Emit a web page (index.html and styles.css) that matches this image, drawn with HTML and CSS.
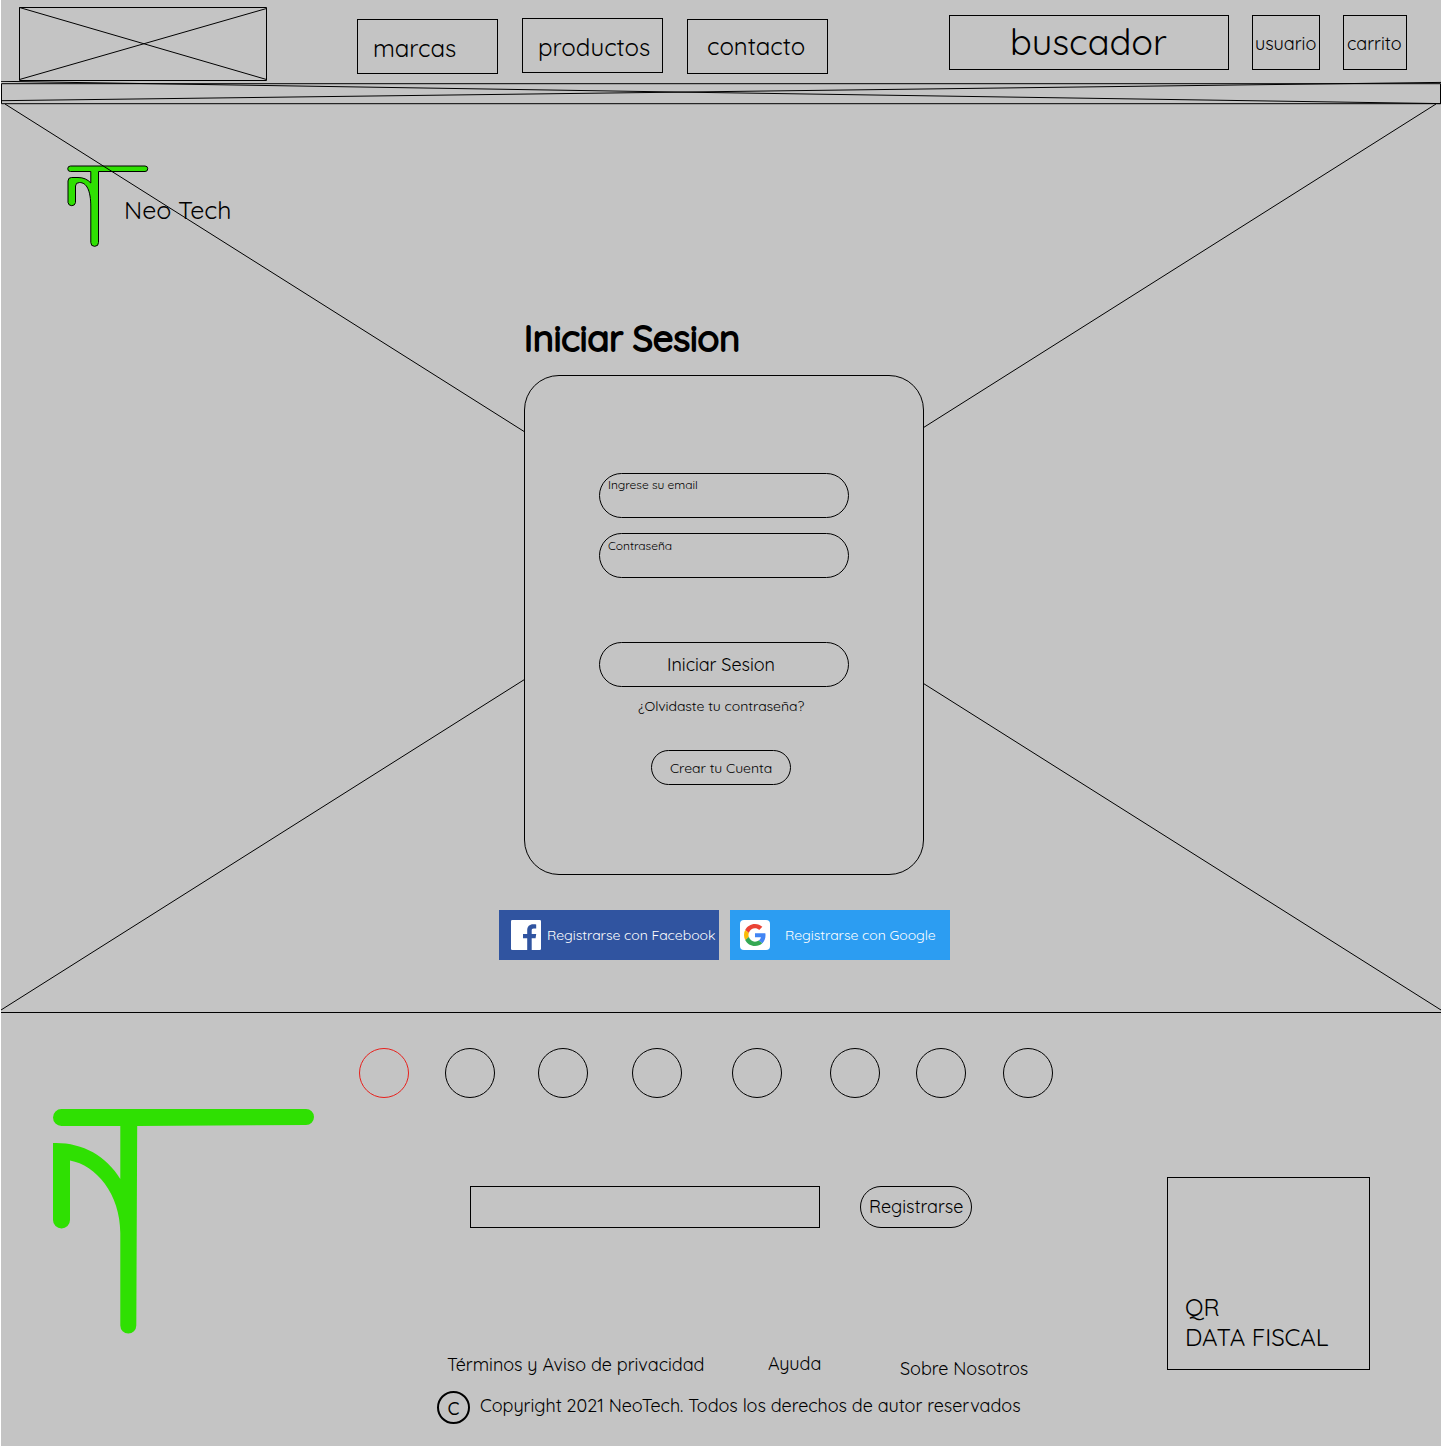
FILE: index.html
```
<!DOCTYPE html>
<html lang="es">
<head>
<meta charset="utf-8">
<title>Neo Tech - Iniciar Sesion</title>
<link rel="stylesheet" href="styles.css">
</head>
<body>
<div class="page">
  <header class="header">
    <svg class="logo-box" viewBox="0 0 248 74"><path d="M.5.5h247v73H.5zM.5.5l247 72M.5 72.5L247.5 1.500" fill="none" stroke="#000"/></svg>
    <nav class="nav">
      <a class="box marcas">marcas</a>
      <a class="box productos">productos</a>
      <a class="box contacto">contacto</a>
    </nav>
    <div class="box buscador">buscador</div>
    <div class="box usuario">usuario</div>
    <div class="box carrito">carrito</div>
  </header>
  <svg class="strip" viewBox="0 0 1440 24"><path d="M.5 2.700H1439.500V22.700H.5zM0 .3L680 11.100L1440 22.600M0 19.700L680 11.100L1440 1.400" fill="none" stroke="#000"/></svg>

  <main class="main">
    <svg class="cross" viewBox="0 0 1440 908"><path d="M4 0L1440 906M0 906L1435 0" fill="none" stroke="#000"/></svg>
    <div class="brand">
      <svg class="brand-mark" viewBox="0 0 84 84"><path d="M4.500 2H79A2.750 2.750 0 0 1 79 7.500H32.500V78.500A3.800 3.800 0 0 1 24.800 78.500V43C24.800 26 20.500 18.500 13.500 18.500Q9.500 18.500 9.500 22V38.500A3.800 3.800 0 0 1 2 38.500V17Q2 13.500 5.500 13.500H12Q20 13.500 24.800 19V7.500H4.500A2.750 2.750 0 0 1 4.500 2Z" fill="#2fe002" stroke="#000"/></svg>
      <span class="brand-name">Neo Tech</span>
    </div>
    <h1 class="title">Iniciar Sesion</h1>
    <form class="card">
      <label class="field">Ingrese su email</label>
      <label class="field pass">Contraseña</label>
      <div class="submit">Iniciar Sesion</div>
      <a class="forgot">¿Olvidaste tu contraseña?</a>
      <a class="create">Crear tu Cuenta</a>
    </form>
    <div class="social">
      <a class="sbtn facebook">
        <svg class="sicon" viewBox="0 0 30 30"><rect width="30" height="30" rx="1.300" fill="#fff"/><path d="M16.200 30V18.300H12V14H16.200V10.500C16.200 6.500 18.500 4.300 22.200 4.300C23.700 4.300 24.700 4.400 25.200 4.500V8.500H22.800C21 8.500 20.700 9.400 20.700 10.700V14H25.200L24.600 18.300H20.700V30Z" fill="#3054a0"/></svg>
        <span>Registrarse con Facebook</span>
      </a>
      <a class="sbtn google">
        <svg class="sicon" viewBox="0 0 30 30"><rect width="30" height="30" rx="4" fill="#fff"/><g transform="translate(4 4) scale(.458)"><path fill="#ea4335" d="M24 9.500c3.540 0 6.710 1.220 9.210 3.600l6.850-6.850C35.900 2.380 30.470 0 24 0 14.620 0 6.510 5.380 2.560 13.220l7.980 6.190C12.430 13.720 17.740 9.500 24 9.500z"/><path fill="#4285f4" d="M46.980 24.550c0-1.570-.15-3.090-.38-4.550H24v9.020h12.940c-.58 2.960-2.260 5.480-4.780 7.180l7.730 6c4.510-4.180 7.090-10.360 7.090-17.650z"/><path fill="#fbbc05" d="M10.530 28.590c-.48-1.450-.76-2.990-.76-4.590s.27-3.140.76-4.590l-7.980-6.190C.92 16.460 0 20.120 0 24c0 3.880.92 7.540 2.560 10.780l7.970-6.190z"/><path fill="#34a853" d="M24 48c6.480 0 11.930-2.130 15.890-5.810l-7.730-6c-2.150 1.450-4.920 2.300-8.160 2.300-6.260 0-11.570-4.220-13.470-9.910l-7.980 6.190C6.510 42.620 14.620 48 24 48z"/></g></svg>
        <span>Registrarse con Google</span>
      </a>
    </div>
  </main>

  <footer class="footer">
    <svg class="foot-logo" viewBox="0 0 262 225"><path d="M8.500 0H253A8 8 0 0 1 253 16L84.200 17L83.300 216.500A8 8 0 0 1 67.300 216.500V124C67.300 85 43 56 17 51.500V111A8.500 8.500 0 0 1 0 111V34C28 33 53 46 67.300 70V17H8.500A8.500 8.500 0 0 1 8.500 0Z" fill="#2fe002"/></svg>
    <div class="foot-center">
      <div class="dots">
        <i class="dot red"></i><i class="dot d2"></i><i class="dot d3"></i><i class="dot d4"></i><i class="dot d5"></i><i class="dot d6"></i><i class="dot d7"></i><i class="dot d8"></i>
      </div>
      <div class="newsletter">
        <div class="news-input"></div>
        <div class="news-btn">Registrarse</div>
      </div>
      <div class="links"><a class="l1">Términos y Aviso de privacidad</a><a class="l2">Ayuda</a><a class="l3">Sobre Nosotros</a></div>
      <div class="copy"><span class="c-mark">c</span><span class="c-text">Copyright 2021 NeoTech. Todos los derechos de autor reservados</span></div>
    </div>
    <div class="qr">QR<br>DATA FISCAL</div>
  </footer>
</div>
</body>
</html>
```
FILE: styles.css
```
* { box-sizing: border-box; }
body {
  margin: 0;
  background: #fff;
  color: #000;
  font-family: Quicksand, Lato, sans-serif;
  font-size: 18px;
  font-weight: 400;
  line-height: 1.25;
  letter-spacing: -0.04px;
  white-space: nowrap;
}
svg { display: block; flex: none; }
.page {
  width: 1440px;
  height: 1446px;
  margin-left: 1px;
  background: #c4c4c4;
  overflow: hidden;
}

.header { display: flex; align-items: flex-start; height: 81px; }
.logo-box { width: 248px; height: 74px; margin: 7px 0 0 18px; }
.nav { display: flex; gap: 24px; margin: 18px 0 0 90px; align-items: flex-start; }
.box { flex: none; border: 1px solid #000; height: 55px; }
.nav .box { width: 141px; font-size: 24px; }
.marcas { margin-top: 1px; padding: 13px 0 0 15px; }
.productos { padding: 13px 0 0 15px; }
.contacto { margin-top: 1px; padding: 11px 0 0 19px; }
.buscador { width: 280px; margin: 15px 0 0 121px; padding: 3px 0 0 60px; font-size: 36px; }
.usuario { width: 68px; margin: 15px 0 0 23px; padding: 17px 0 0 2px; }
.carrito { width: 64px; margin: 15px 0 0 23px; padding: 17px 0 0 3px; }
.strip { width: 1440px; height: 24px; }

.main {
  position: relative;
  height: 909px;
  margin-top: -1px;
  border-bottom: 1px solid #000;
}
.cross { position: absolute; left: 0; top: 0; width: 1440px; height: 908px; z-index: 1; }
.brand { display: flex; height: 142px; padding: 60px 0 0 65px; }
.brand-mark { width: 84px; height: 84px; }
.brand-name { margin: 30px 0 0 -26px; font-size: 25px; }
.title {
  margin: 69px 0 0 523px;
  height: 60px;
  font-size: 36px;
  font-weight: 400;
  letter-spacing: -0.08px;
  -webkit-text-stroke: 2px #000;
}
.card {
  position: relative;
  z-index: 2;
  display: flex;
  flex-direction: column;
  align-items: flex-start;
  width: 400px;
  height: 500px;
  margin-left: 523px;
  padding: 97px 0 0 74px;
  border: 1px solid #000;
  border-radius: 35px;
  background: #c4c4c4;
}
.field, .submit { width: 250px; height: 45px; border: 1px solid #000; border-radius: 22.5px; }
.field { padding: 3px 0 0 8px; font-size: 12px; }
.pass { margin-top: 15px; padding-top: 4px; }
.submit { margin-top: 64px; padding: 11px 0 0 67px; }
.forgot { margin: 10px 0 0 39px; font-size: 14px; line-height: 18px; }
.create {
  width: 140px;
  height: 35px;
  margin: 35px 0 0 52px;
  padding: 9px 0 0 18px;
  border: 1px solid #000;
  border-radius: 17.5px;
  font-size: 14px;
}
.social { display: flex; gap: 11px; margin: 35px 0 0 498px; }
.sbtn { display: flex; width: 220px; height: 50px; padding-top: 10px; color: #fff; font-size: 14px; }
.sbtn span { margin-top: 7px; }
.sicon { width: 30px; height: 30px; }
.facebook { padding-left: 12px; gap: 6px; background: #3054a0; }
.google { padding-left: 10px; gap: 15px; background: #2c9df2; }

.footer { display: flex; align-items: flex-start; }
.foot-logo { width: 262px; height: 225px; margin: 96px 0 0 52px; }
.foot-center { width: 720px; margin: 35px 0 0 44px; }
.dots { display: flex; }
.dot { flex: none; width: 50px; height: 50px; border: 1px solid #000; border-radius: 50%; }
.red { border-color: #e8201c; }
.d2, .d7 { margin-left: 36px; }
.d3 { margin-left: 43px; }
.d4 { margin-left: 44px; }
.d5 { margin-left: 50px; }
.d6 { margin-left: 48px; }
.d8 { margin-left: 37px; }
.newsletter { display: flex; gap: 40px; margin: 88px 0 0 111px; }
.news-input { width: 350px; height: 42px; border: 1px solid #000; }
.news-btn { width: 112px; height: 42px; padding: 9px 0 0 8px; border: 1px solid #000; border-radius: 21px; }
.links { display: flex; margin: 125px 0 0 88px; height: 38px; }
.l1 { width: 321px; margin-top: 1px; }
.l2 { width: 132px; }
.l3 { margin-top: 5px; }
.copy { display: flex; margin-left: 78px; }
.c-mark {
  width: 33px;
  height: 33px;
  border: 2px solid #000;
  border-radius: 50%;
  font-size: 24px;
  line-height: 27px;
  text-align: center;
}
.c-text { margin: 4px 0 0 10px; }
.qr {
  width: 203px;
  height: 193px;
  margin: 164px 0 0 88px;
  padding: 114px 0 0 17px;
  border: 1px solid #000;
  font-size: 24px;
}
```
